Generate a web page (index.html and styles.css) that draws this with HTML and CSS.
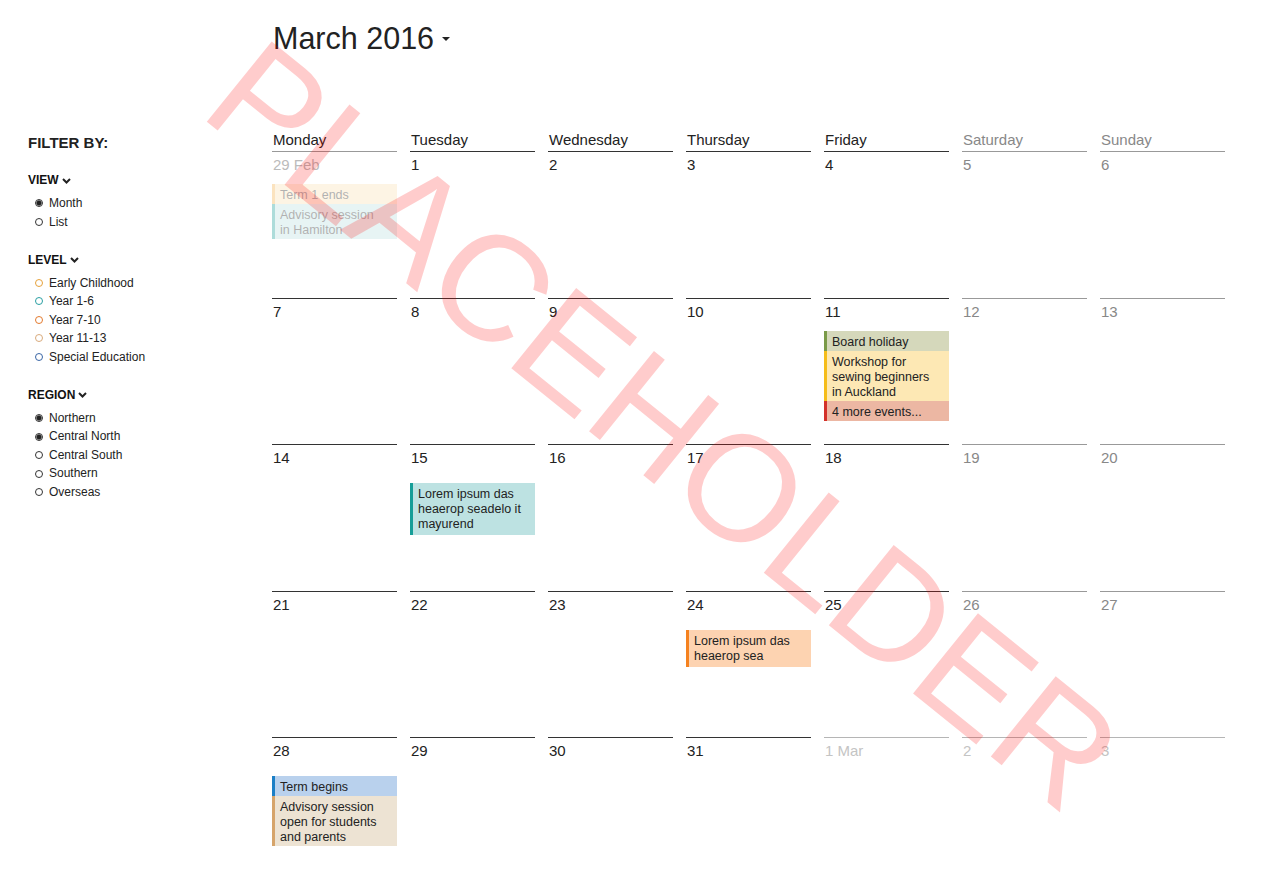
FILE: index.html
```html
<!DOCTYPE html>
<html lang="en">
<head>
<meta charset="utf-8">
<title>March 2016</title>
<link rel="stylesheet" href="styles.css">
</head>
<body>
<div class="page">
  <aside class="sidebar">
    <h2 class="filter-title">FILTER BY:</h2>
    <section class="filter">
      <h3 class="filter-head">VIEW <svg class="chev" width="9" height="6" viewBox="0 0 9 6"><polyline points="1,1 4.5,4.5 8,1" fill="none" stroke="#222" stroke-width="2"/></svg></h3>
      <ul class="opts">
        <li><span class="radio checked"></span>Month</li>
        <li><span class="radio"></span>List</li>
      </ul>
    </section>
    <section class="filter">
      <h3 class="filter-head">LEVEL <svg class="chev" width="9" height="6" viewBox="0 0 9 6"><polyline points="1,1 4.5,4.5 8,1" fill="none" stroke="#222" stroke-width="2"/></svg></h3>
      <ul class="opts">
        <li><span class="radio c-early"></span>Early Childhood</li>
        <li><span class="radio c-y16"></span>Year 1-6</li>
        <li><span class="radio c-y710"></span>Year 7-10</li>
        <li><span class="radio c-y1113"></span>Year 11-13</li>
        <li><span class="radio c-special"></span>Special Education</li>
      </ul>
    </section>
    <section class="filter">
      <h3 class="filter-head">REGION <svg class="chev" width="9" height="6" viewBox="0 0 9 6"><polyline points="1,1 4.5,4.5 8,1" fill="none" stroke="#222" stroke-width="2"/></svg></h3>
      <ul class="opts">
        <li><span class="radio checked"></span>Northern</li>
        <li><span class="radio checked"></span>Central North</li>
        <li><span class="radio"></span>Central South</li>
        <li><span class="radio"></span>Southern</li>
        <li><span class="radio"></span>Overseas</li>
      </ul>
    </section>
  </aside>

  <main class="main">
    <h1 class="title">March 2016<span class="caret"></span></h1>

    <div class="cal">
      <div class="dayname">Monday</div>
      <div class="dayname">Tuesday</div>
      <div class="dayname">Wednesday</div>
      <div class="dayname">Thursday</div>
      <div class="dayname">Friday</div>
      <div class="dayname weekend">Saturday</div>
      <div class="dayname weekend">Sunday</div>

      <!-- week 1 -->
      <div class="cell other"><div class="date">29 Feb</div>
        <div class="event ev-yellow faded">Term 1 ends</div>
        <div class="event ev-teal faded">Advisory session in Hamilton</div>
      </div>
      <div class="cell"><div class="date">1</div></div>
      <div class="cell"><div class="date">2</div></div>
      <div class="cell"><div class="date">3</div></div>
      <div class="cell"><div class="date">4</div></div>
      <div class="cell weekend"><div class="date">5</div></div>
      <div class="cell weekend"><div class="date">6</div></div>

      <!-- week 2 -->
      <div class="cell"><div class="date">7</div></div>
      <div class="cell"><div class="date">8</div></div>
      <div class="cell"><div class="date">9</div></div>
      <div class="cell"><div class="date">10</div></div>
      <div class="cell"><div class="date">11</div>
        <div class="event ev-olive">Board holiday</div>
        <div class="event ev-yellow">Workshop for sewing beginners in Auckland</div>
        <div class="event ev-red">4 more events...</div>
      </div>
      <div class="cell weekend"><div class="date">12</div></div>
      <div class="cell weekend"><div class="date">13</div></div>

      <!-- week 3 -->
      <div class="cell"><div class="date">14</div></div>
      <div class="cell lower"><div class="date">15</div>
        <div class="event ev-teal">Lorem ipsum das heaerop seadelo it mayurend</div>
      </div>
      <div class="cell"><div class="date">16</div></div>
      <div class="cell"><div class="date">17</div></div>
      <div class="cell"><div class="date">18</div></div>
      <div class="cell weekend"><div class="date">19</div></div>
      <div class="cell weekend"><div class="date">20</div></div>

      <!-- week 4 -->
      <div class="cell"><div class="date">21</div></div>
      <div class="cell"><div class="date">22</div></div>
      <div class="cell"><div class="date">23</div></div>
      <div class="cell lower"><div class="date">24</div>
        <div class="event ev-orange">Lorem ipsum das heaerop sea</div>
      </div>
      <div class="cell"><div class="date">25</div></div>
      <div class="cell weekend"><div class="date">26</div></div>
      <div class="cell weekend"><div class="date">27</div></div>

      <!-- week 5 -->
      <div class="cell lower"><div class="date">28</div>
        <div class="event ev-blue">Term begins</div>
        <div class="event ev-tan">Advisory session open for students and parents</div>
      </div>
      <div class="cell"><div class="date">29</div></div>
      <div class="cell"><div class="date">30</div></div>
      <div class="cell"><div class="date">31</div></div>
      <div class="cell other-next"><div class="date">1 Mar</div></div>
      <div class="cell other-next"><div class="date">2</div></div>
      <div class="cell other-next"><div class="date">3</div></div>
    </div>
  </main>
</div>
<div class="watermark">PLACEHOLDER</div>
</body>
</html>
```

FILE: styles.css
```css
* { box-sizing: border-box; }

html, body {
  margin: 0;
  padding: 0;
  background: #fff;
}

body {
  font-family: "Liberation Sans", Arial, Helvetica, sans-serif;
  color: #222;
  position: relative;
  min-height: 874px;
  overflow: hidden;
}

.page {
  display: flex;
  align-items: flex-start;
}

/* ---------- sidebar ---------- */
.sidebar {
  width: 272px;
  flex: 0 0 272px;
  padding: 134px 0 0 28px;
}

.filter-title {
  margin: 0;
  font-size: 15px;
  line-height: 18px;
  font-weight: bold;
  color: #222;
}

.filter { margin-top: 20.7px; }
.filter:first-of-type { margin-top: 20px; }

.filter-head {
  margin: 0;
  font-size: 12px;
  line-height: 16px;
  font-weight: bold;
  color: #111;
  display: flex;
  align-items: center;
  gap: 3px;
}

.chev { display: block; margin-top: 1px; }

.opts {
  list-style: none;
  margin: 6px 0 0 0;
  padding: 0 0 0 7px;
}

.opts li {
  font-size: 12px;
  line-height: 18.5px;
  height: 18.5px;
  display: flex;
  align-items: center;
  color: #222;
}

.radio {
  width: 8px;
  height: 8px;
  border: 1px solid #333;
  border-radius: 50%;
  margin-right: 6px;
  flex: 0 0 8px;
  background: #fff;
}

.radio.checked {
  background: radial-gradient(circle, #222 0 2px, #888 2.6px, #fff 3.2px);
  border-color: #333;
}

.c-early { border-color: #e6a23c; }
.c-y16 { border-color: #2a9fa3; }
.c-y710 { border-color: #e47a2e; }
.c-y1113 { border-color: #d9aa7c; }
.c-special { border-color: #3a66a6; }

/* ---------- main ---------- */
.main {
  width: 953px;
  padding-top: 20px;
}

.title {
  margin: 0;
  font-size: 30.5px;
  line-height: 36px;
  font-weight: normal;
  color: #222;
  display: flex;
  align-items: center;
  padding-left: 1px;
}

.caret {
  display: inline-block;
  width: 0;
  height: 0;
  border-left: 4px solid transparent;
  border-right: 4px solid transparent;
  border-top: 4px solid #222;
  margin-left: 8px;
  margin-top: 2px;
}

.cal {
  margin-top: 75px;
  display: grid;
  grid-template-columns: repeat(7, 125px);
  column-gap: 13px;
  grid-template-rows: 20px 147px 146px 147px 146px 140px;
}

.dayname {
  font-size: 15px;
  line-height: 18px;
  color: #222;
  padding-left: 1px;
}

.dayname.weekend { color: #888; }

.cell {
  border-top: 1px solid #333;
  padding-top: 4px;
}

.cell.weekend { border-top-color: #999; }
.cell.weekend .date { color: #888; }

.cell.other { border-top-color: #999; }
.cell.other .date { color: #bbb; }

.cell.other-next { border-top-color: #b5b5b5; }
.cell.other-next .date { color: #c4c4c4; }

.date {
  font-size: 15px;
  line-height: 18px;
  color: #222;
  padding-left: 1px;
  margin-bottom: 10px;
}

.cell.lower .date { margin-bottom: 16px; }

.event {
  font-size: 12.5px;
  line-height: 15px;
  padding: 4px 12px 1px 5px;
  border-left: 3px solid;
  color: #222;
}

.ev-orange, .ev-teal:not(.faded) { padding-top: 4px; padding-bottom: 3px; }

.event.faded { opacity: 0.35; }

.ev-yellow { border-left-color: #f5bd1a; background: #fde8b4; }
.ev-teal   { border-left-color: #169e98; background: #bde2e2; }
.ev-olive  { border-left-color: #7a9a48; background: #d5d8bb; }
.ev-red    { border-left-color: #d3312a; background: #ecb7a3; }
.ev-orange { border-left-color: #f5821f; background: #fdd3b1; }
.ev-blue   { border-left-color: #1b7fc6; background: #b9d1ed; }
.ev-tan    { border-left-color: #d6a46a; background: #ede3d3; }

.ev-yellow.faded { border-left-color: #f5b04a; background: #fbe1b5; }

/* ---------- watermark overlay ---------- */
.watermark {
  position: absolute;
  left: 664px;
  top: 425px;
  transform: translate(-50%, -50%) rotate(39deg);
  font-family: "Liberation Sans", Arial, sans-serif;
  font-size: 150px;
  line-height: 1;
  color: rgba(255, 0, 0, 0.2);
  white-space: nowrap;
  pointer-events: none;
}
```
